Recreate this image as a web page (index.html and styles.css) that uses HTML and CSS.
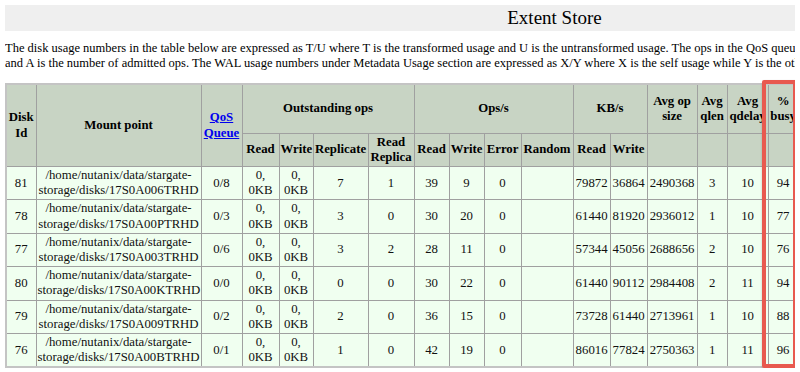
FILE: index.html
```html
<!DOCTYPE html>
<html>
<head>
<meta charset="utf-8">
<title>Extent Store</title>
<link rel="stylesheet" href="styles.css">
</head>
<body>
<div class="page">
  <div class="title-bar">Extent Store</div>
  <p class="intro">The disk usage numbers in the table below are expressed as T/U where T is the transformed usage and U is the untransformed usage. The ops in the QoS queue are expressed as Q/A where Q is the number of queued ops<br>and A is the number of admitted ops. The WAL usage numbers under Metadata Usage section are expressed as X/Y where X is the self usage while Y is the other usage.</p>

  <table class="disks">
    <colgroup>
      <col class="w30"><col class="w165"><col class="w41">
      <col class="w37"><col class="w34"><col class="w55"><col class="w46">
      <col class="w35"><col class="w35"><col class="w37"><col class="w52">
      <col class="w37"><col class="w37">
      <col class="w50"><col class="w30"><col class="w41"><col class="w30">
      <col class="w60"><col class="w60"><col class="w60">
    </colgroup>
    <thead>
      <tr class="head1">
        <th rowspan="2">Disk Id</th>
        <th rowspan="2">Mount point</th>
        <th rowspan="2"><a href="#">QoS Queue</a></th>
        <th colspan="4">Outstanding ops</th>
        <th colspan="4">Ops/s</th>
        <th colspan="2">KB/s</th>
        <th>Avg op size</th>
        <th>Avg qlen</th>
        <th>Avg qdelay</th>
        <th>% busy</th>
        <th>Size (GB)</th>
        <th>Total usage (GB)</th>
        <th>Unshared usage (GB)</th>
      </tr>
      <tr class="head2">
        <th>Read</th><th>Write</th><th>Replicate</th><th>Read Replica</th>
        <th>Read</th><th>Write</th><th>Error</th><th>Random</th>
        <th>Read</th><th>Write</th>
        <th></th><th></th><th></th><th></th><th></th><th></th><th></th>
      </tr>
    </thead>
    <tbody>
      <tr>
        <td>81</td><td>/home/nutanix/data/stargate-storage/disks/17S0A006TRHD</td><td>0/8</td>
        <td>0, 0KB</td><td>0, 0KB</td><td>7</td><td>1</td>
        <td>39</td><td>9</td><td>0</td><td></td>
        <td>79872</td><td>36864</td><td>2490368</td><td>3</td><td>10</td><td>94</td>
        <td>1788</td><td>1212</td><td>1198</td>
      </tr>
      <tr>
        <td>78</td><td>/home/nutanix/data/stargate-storage/disks/17S0A00PTRHD</td><td>0/3</td>
        <td>0, 0KB</td><td>0, 0KB</td><td>3</td><td>0</td>
        <td>30</td><td>20</td><td>0</td><td></td>
        <td>61440</td><td>81920</td><td>2936012</td><td>1</td><td>10</td><td>77</td>
        <td>1788</td><td>1206</td><td>1191</td>
      </tr>
      <tr>
        <td>77</td><td>/home/nutanix/data/stargate-storage/disks/17S0A003TRHD</td><td>0/6</td>
        <td>0, 0KB</td><td>0, 0KB</td><td>3</td><td>2</td>
        <td>28</td><td>11</td><td>0</td><td></td>
        <td>57344</td><td>45056</td><td>2688656</td><td>2</td><td>10</td><td>76</td>
        <td>1788</td><td>1210</td><td>1195</td>
      </tr>
      <tr>
        <td>80</td><td>/home/nutanix/data/stargate-storage/disks/17S0A00KTRHD</td><td>0/0</td>
        <td>0, 0KB</td><td>0, 0KB</td><td>0</td><td>0</td>
        <td>30</td><td>22</td><td>0</td><td></td>
        <td>61440</td><td>90112</td><td>2984408</td><td>2</td><td>11</td><td>94</td>
        <td>1788</td><td>1208</td><td>1194</td>
      </tr>
      <tr>
        <td>79</td><td>/home/nutanix/data/stargate-storage/disks/17S0A009TRHD</td><td>0/2</td>
        <td>0, 0KB</td><td>0, 0KB</td><td>2</td><td>0</td>
        <td>36</td><td>15</td><td>0</td><td></td>
        <td>73728</td><td>61440</td><td>2713961</td><td>1</td><td>10</td><td>88</td>
        <td>1788</td><td>1204</td><td>1189</td>
      </tr>
      <tr>
        <td>76</td><td>/home/nutanix/data/stargate-storage/disks/17S0A00BTRHD</td><td>0/1</td>
        <td>0, 0KB</td><td>0, 0KB</td><td>1</td><td>0</td>
        <td>42</td><td>19</td><td>0</td><td></td>
        <td>86016</td><td>77824</td><td>2750363</td><td>1</td><td>11</td><td>96</td>
        <td>1788</td><td>1209</td><td>1196</td>
      </tr>
    </tbody>
  </table>

  <div class="highlight"></div>
</div>
</body>
</html>
```

FILE: styles.css
```css
html {
  overflow: hidden;
  background: #ffffff;
}

body {
  margin: 5px;
  font-family: "Liberation Serif", "Times New Roman", serif;
  font-size: 12.8px;
  color: #000;
}

.page {
  position: relative;
  width: 1099px;
}

.title-bar {
  background: #efefef;
  height: 26px;
  line-height: 26px;
  text-align: center;
  font-size: 19px;
}

.intro {
  margin: 10px 0 13px 0;
  white-space: nowrap;
  font-size: 12.5px;
  line-height: 14.5px;
}

.disks {
  table-layout: fixed;
  width: 972px;
  border-collapse: collapse;
  border: 2px solid #c4c4c4;
}

.disks th,
.disks td {
  border: 1px solid #a0a0a0;
  padding: 1px 1px;
  line-height: 15.2px;
  text-align: center;
  vertical-align: middle;
}

.disks th {
  background: #c8d4c4;
  font-weight: bold;
}

.disks td {
  background: #f0fff0;
  color: #111;
}

.disks .head1 th {
  height: 45px;
}

.disks a {
  color: #0000ee;
  text-decoration: underline;
}

.w30 { width: 30px; }
.w34 { width: 34px; }
.w35 { width: 35px; }
.w37 { width: 37px; }
.w41 { width: 41px; }
.w46 { width: 46px; }
.w50 { width: 50px; }
.w52 { width: 52px; }
.w55 { width: 55px; }
.w60 { width: 60px; }
.w165 { width: 165px; }

.highlight {
  position: absolute;
  z-index: 2;
  left: 757px;
  top: 75px;
  width: 35px;
  height: 288px;
  box-sizing: border-box;
  border: 4px solid #e8594f;
  border-radius: 2px;
  box-shadow: 1px 2px 3px rgba(0, 0, 0, 0.45);
}
```
